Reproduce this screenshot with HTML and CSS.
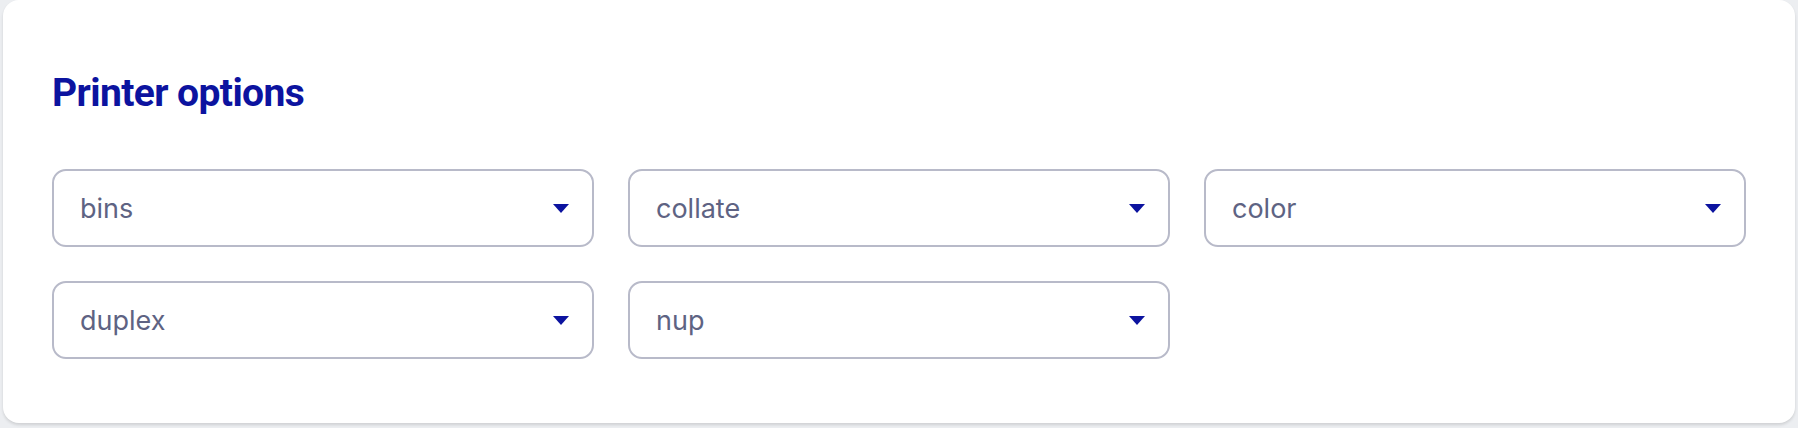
FILE: index.html
```html
<!DOCTYPE html>
<html lang="en">
<head>
<meta charset="utf-8">
<title>Printer options</title>
<link rel="stylesheet" href="styles.css">
</head>
<body>
<section class="card">
  <h2 class="card-title">Printer options</h2>
  <div class="grid">
    <div class="select"><span class="select-label">bins</span><svg class="caret" width="16" height="9" viewBox="0 0 16 9"><path d="M0 0H16L8 9Z"/></svg></div>
    <div class="select"><span class="select-label">collate</span><svg class="caret" width="16" height="9" viewBox="0 0 16 9"><path d="M0 0H16L8 9Z"/></svg></div>
    <div class="select"><span class="select-label">color</span><svg class="caret" width="16" height="9" viewBox="0 0 16 9"><path d="M0 0H16L8 9Z"/></svg></div>
    <div class="select"><span class="select-label">duplex</span><svg class="caret" width="16" height="9" viewBox="0 0 16 9"><path d="M0 0H16L8 9Z"/></svg></div>
    <div class="select"><span class="select-label">nup</span><svg class="caret" width="16" height="9" viewBox="0 0 16 9"><path d="M0 0H16L8 9Z"/></svg></div>
  </div>
</section>
</body>
</html>
```

FILE: styles.css
```css
html, body {
  margin: 0;
  padding: 0;
}
body {
  background: #eceef1;
  font-family: Inter, "Noto Sans", sans-serif;
  padding: 0 3px;
  height: 428px;
  box-sizing: border-box;
}
.card {
  background: #ffffff;
  border-radius: 16px;
  height: 423px;
  box-sizing: border-box;
  padding: 69px 49px 0 49px;
  box-shadow: 0 2px 3px rgba(0, 0, 0, 0.12);
}
.card-title {
  margin: 0 0 52px 0;
  font-family: Roboto, "Liberation Sans", sans-serif;
  font-weight: 700;
  font-size: 39px;
  line-height: 48px;
  letter-spacing: -0.6px;
  color: #0c139f;
}
.grid {
  display: grid;
  grid-template-columns: repeat(3, 1fr);
  column-gap: 34px;
  row-gap: 34px;
}
.select {
  height: 78px;
  box-sizing: border-box;
  border: 2px solid #b8bac9;
  border-radius: 14px;
  display: flex;
  align-items: center;
  justify-content: space-between;
  padding: 0 23px 0 26px;
}
.select-label {
  font-size: 27px;
  color: #5e6383;
}
.caret {
  fill: #0c139f;
  display: block;
}
```
